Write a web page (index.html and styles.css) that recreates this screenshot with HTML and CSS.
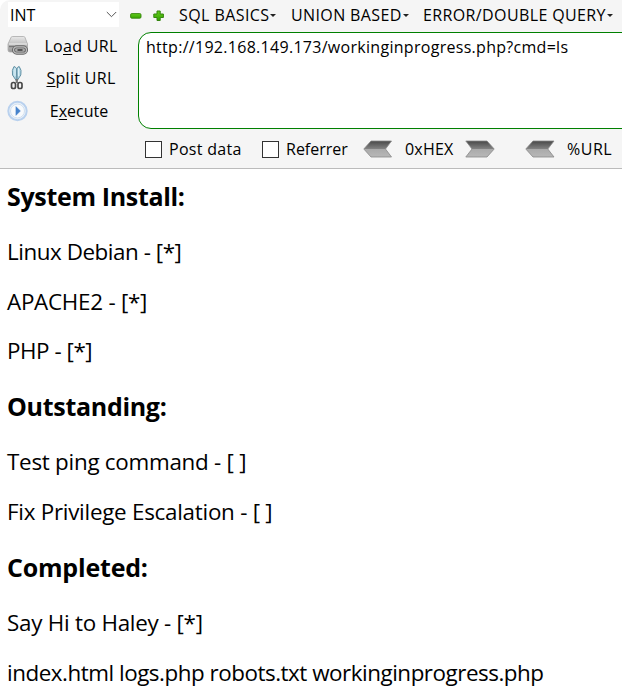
FILE: index.html
```html
<!DOCTYPE html>
<html lang="en">
<head>
<meta charset="utf-8">
<title>Work in progress</title>
<link rel="stylesheet" href="styles.css">
</head>
<body>
<svg class="defs" width="0" height="0">
  <defs>
    <linearGradient id="steel" x1="0" y1="0" x2="0" y2="1">
      <stop offset="0" stop-color="#484848"/><stop offset=".48" stop-color="#818181"/>
      <stop offset=".52" stop-color="#aaa"/><stop offset="1" stop-color="#b8b8b8"/>
    </linearGradient>
    <linearGradient id="green" x1="0" y1="0" x2="0" y2="1">
      <stop offset="0" stop-color="#62cb1b"/><stop offset="1" stop-color="#35a500"/>
    </linearGradient>
    <linearGradient id="drive" x1="0" y1="0" x2="0" y2="1">
      <stop offset="0" stop-color="#e9e9e9"/><stop offset="1" stop-color="#969696"/>
    </linearGradient>
  </defs>
</svg>
<header class="toolbar">
  <div class="side">
    <div class="select"><span class="t-int">INT</span>
      <svg width="11" height="7" viewBox="0 0 11 7"><path d="M.8 1 5.5 5.7 10.2 1" fill="none" stroke="#555" stroke-width="1"/></svg>
    </div>
    <div class="action">
      <svg width="22" height="20" viewBox="0 0 22 20"><path d="M4 1.5Q4.3.5 5.5.5H16.5Q17.7.5 18 1.5L20.5 8V14Q20.5 16 18.5 16H3Q1 16 1 14V8Z" fill="url(#drive)" stroke="#aaa" stroke-width=".8"/><path d="M2 8H20" stroke="#eee"/><path d="M2 10.5H7" stroke="#777" stroke-width="1.5"/><rect x="6.5" y="10.8" width="13" height="6.4" rx="3.2" fill="#aaa" stroke="#666" stroke-width="3"/><rect x="6.5" y="10.8" width="13" height="6.4" rx="3.2" fill="none" stroke="#bcbcbc" stroke-width="1.2"/><path d="M10.5 14H15.5" stroke="#555" stroke-width="2"/></svg>
      <span class="t-load">Lo<u>a</u>d URL</span>
    </div>
    <div class="action">
      <svg width="22" height="26" viewBox="0 0 22 26"><path d="M7 1.5Q4.5 5 5.5 10L9.2 15.5 9.7 4Q8.5 1.5 7 1.5ZM12.2 1.5Q15 5 13.8 10L10.3 15.5 9.8 4Q10.7 1.5 12.2 1.5Z" fill="#b7dbe8" stroke="#6391a5"/><path d="M8 3V11M11.5 3V11" stroke="#e7f5fa" stroke-width=".8"/><path d="M9.8 14V18" stroke="#777" stroke-width="2.2"/><rect x="4.5" y="17.5" width="4" height="6" rx="1.8" fill="none" stroke="#484848" stroke-width="1.7"/><rect x="11" y="17.5" width="4" height="6" rx="1.8" fill="none" stroke="#484848" stroke-width="1.7"/></svg>
      <span class="t-split"><u>S</u>plit URL</span>
    </div>
    <div class="action">
      <svg width="22" height="22" viewBox="0 0 22 22"><circle cx="10.5" cy="11" r="9.2" fill="#edf3fa" stroke="#b9d1ee" stroke-width="2"/><circle cx="10.5" cy="11" r="7" fill="#f8fafc" stroke="#d0dfef"/><path d="M9 6.7 13.3 11 9 15.3Z" fill="#4683cc" stroke="#4683cc" stroke-width=".7"/></svg>
      <span class="t-exec">E<u>x</u>ecute</span>
    </div>
  </div>
  <div class="main">
    <nav class="menu">
      <svg class="minus" width="12" height="12" viewBox="0 0 12 12"><rect x=".6" y="3.6" width="10.4" height="4.6" rx="1.2" fill="url(#green)" stroke="#35850f" stroke-width=".9"/></svg>
      <svg class="plus" width="12" height="12" viewBox="0 0 12 12"><path d="M4 1H7.2V4H10.4V7.5H7.2V10.5H4V7.5H.8V4H4Z" fill="url(#green)" stroke="#35850f" stroke-width="1" stroke-linejoin="round"/></svg>
      <span class="item m-sql"><span class="t-sql">SQL BASICS</span><i></i></span>
      <span class="item m-union"><span class="t-union">UNION BASED</span><i></i></span>
      <span class="item"><span class="t-error">ERROR/DOUBLE QUERY</span><i></i></span>
    </nav>
    <div class="url"><span class="t-url">http://192.168.149.173/workinginprogress.php?cmd=ls</span></div>
    <div class="options">
      <span class="box"></span><span class="label l-post"><span class="t-post">Post data</span></span>
      <span class="box"></span><span class="label l-ref"><span class="t-ref">Referrer</span></span>
      <svg width="30" height="18" viewBox="0 0 30 18"><path d="M.8 9 8 1H28.5L22.5 9 28.5 17H8Z" fill="url(#steel)" stroke="#888" stroke-width=".8"/></svg>
      <span class="label l-hex"><span class="t-hex">0xHEX</span></span>
      <svg class="right" width="30" height="18" viewBox="0 0 30 18"><path d="M29.2 9 22 1H.8L7 9 .8 17H22Z" fill="url(#steel)" stroke="#888" stroke-width=".8"/></svg>
      <svg width="30" height="18" viewBox="0 0 30 18"><path d="M.8 9 8 1H29L22.8 9 29 17H8Z" fill="url(#steel)" stroke="#888" stroke-width=".8"/></svg>
      <span class="label l-pct"><span class="t-pct">%URL</span></span>
    </div>
  </div>
</header>
<main>
  <h2><span class="t-sys">System Install:</span></h2>
  <p><span class="t-linux">Linux Debian - [*]</span></p>
  <p><span class="t-apache">APACHE2 - [*]</span></p>
  <p><span class="t-php">PHP - [*]</span></p>
  <h2><span class="t-out">Outstanding:</span></h2>
  <p><span class="t-ping">Test ping command - [ ]</span></p>
  <p><span class="t-fix">Fix Privilege Escalation - [ ]</span></p>
  <h2><span class="t-comp">Completed:</span></h2>
  <p><span class="t-say">Say Hi to Haley - [*]</span></p>
  <p><span class="t-index">index.html logs.php robots.txt workinginprogress.php</span></p>
</main>
</body>
</html>
```
FILE: styles.css
```css
* { box-sizing: border-box; }
body { margin: 0; width: 622px; height: 697px; overflow: hidden; background: #fff; color: #000; font-family: "Open Sans", "Noto Sans", sans-serif; }
.defs { display: block; height: 0; }
svg { display: block; flex: none; }
span { white-space: nowrap; }
u { text-underline-offset: 2px; text-decoration-thickness: 1px; }
.toolbar { display: flex; height: 169px; background: #f5f5f5; border-bottom: 1px solid #bbb; border-top-left-radius: 10px; font-size: 16px; line-height: 22px; overflow: hidden; }
.side { width: 129px; flex: none; padding-top: 2px; }
.select { display: flex; align-items: center; justify-content: space-between; width: 111px; height: 25px; margin: 0 0 3px 8px; padding: 0 2px; background: #fff; }
.action { display: grid; grid-template-columns: 22px 107px; align-items: center; height: 32.3px; padding-left: 7px; }
.action > span { width: 86px; margin-left: 9px; text-align: center; }
.action > .t-exec { width: 82px; }
.main { flex: 1; min-width: 0; }
.menu { display: flex; align-items: center; height: 32px; padding-left: 1px; }
.minus { margin-right: 11px; }
.plus { margin-right: 14px; }
.item { display: flex; align-items: center; height: 22px; margin-bottom: 2px; }
.item i { border: 3px solid transparent; border-top: 3px solid #222; border-bottom: 0; margin-left: 1px; }
.m-sql { width: 112px; }
.m-union { width: 132px; }
.url { width: 520px; height: 97px; margin-left: 9px; padding: 3px 7px; background: #fff; border: 1px solid #008000; border-radius: 13px; }
.options { display: flex; align-items: center; height: 40px; padding-left: 16px; }
.box { width: 17px; height: 17px; flex: none; border: 1px solid #333; background: #fff; }
.label { flex: none; padding-left: 7px; }
.l-post { width: 100px; }
.l-ref { width: 84px; }
.l-hex { width: 72px; padding-left: 12px; }
.right { margin-right: 30px; }
.l-pct { padding-left: 12px; }
main { padding: 11px 7px; font-size: 22.4px; }
h2 { margin: 0 0 25px; height: 32px; font-size: 25px; line-height: 32px; font-weight: 700; }
p { margin: 0 0 19.7px; height: 30px; line-height: 30px; }
p + h2 { margin-top: 24px; }

/* Tracking per label */
.t-url { letter-spacing: .29px; }
.t-sql { letter-spacing: .42px; }
.t-union, .t-error { letter-spacing: .38px; }
.t-load, .t-split, .t-post { letter-spacing: .3px; }
.t-hex { letter-spacing: .2px; }
.t-pct { letter-spacing: .5px; }
.t-sys { letter-spacing: -.33px; }
.t-linux, .t-php { letter-spacing: -.45px; }
.t-apache, .t-ping, .t-fix, .t-say { letter-spacing: -.26px; }
.t-out { letter-spacing: -.3px; }
.t-comp { letter-spacing: -.2px; }
.t-index { letter-spacing: -.47px; }
```
